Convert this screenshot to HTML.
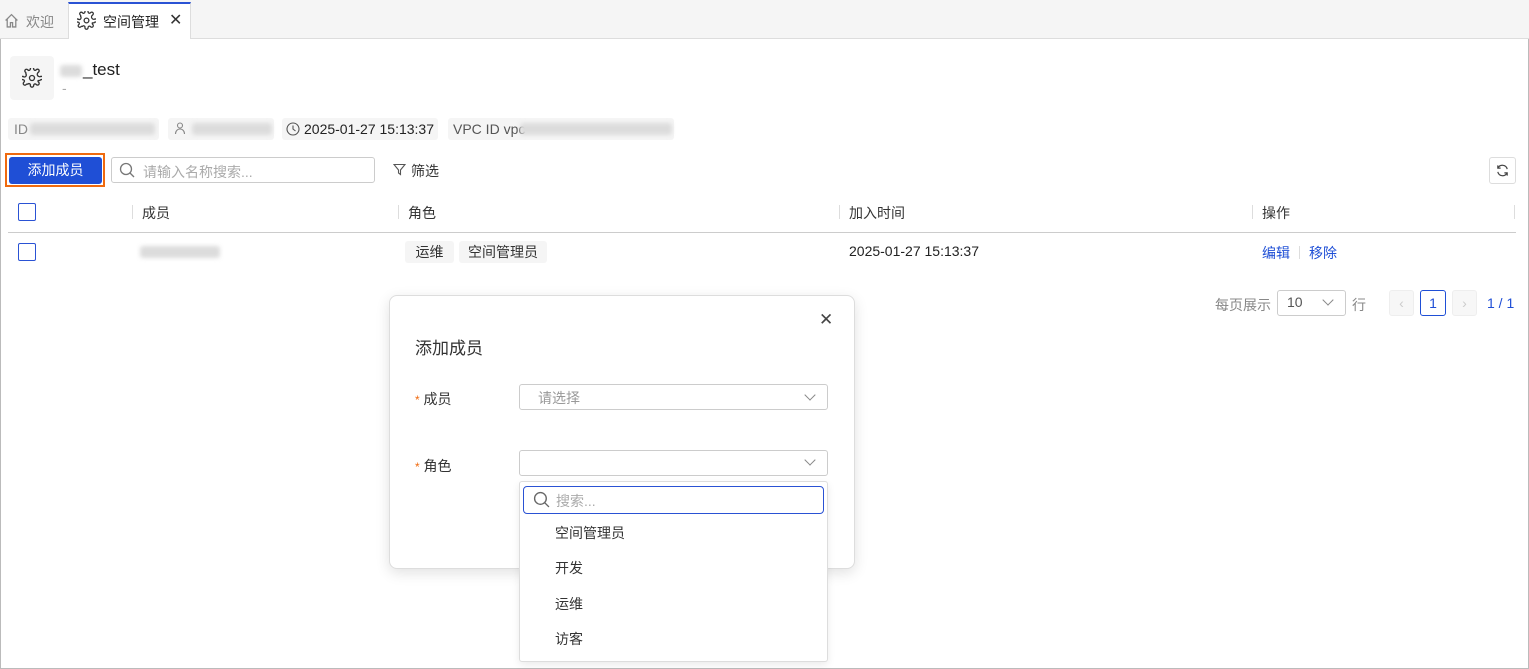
<!DOCTYPE html>
<html><head><meta charset="utf-8"><style>
*{box-sizing:border-box;margin:0;padding:0}
body{width:1529px;height:669px;background:#fff;font-family:"Liberation Sans","Noto Sans CJK SC",sans-serif;font-size:14px;color:#333;position:relative;overflow:hidden;border:1px solid #bbb}
.a{position:absolute}
.tabbar{left:-1px;top:-1px;width:1529px;height:39px;background:#f5f5f5;border-bottom:1px solid #ddd}
.tag{background:#f5f5f5;border-radius:3px;height:22px;line-height:22px}
.blur{background:#dcdcdc;filter:blur(2px);height:12px;border-radius:3px}
.cb{width:18px;height:18px;border:1.5px solid #2a52d4;border-radius:2px}
.div{width:1px;height:14px;background:#ddd}
.sel{border:1px solid #ccc;border-radius:3px;background:#fff}
.chev{width:8px;height:8px;border-right:1.3px solid #888;border-bottom:1.3px solid #888;transform:rotate(45deg)}
</style></head><body>
<div class="a tabbar"></div>
<svg class="a" style="left:3px;top:12px" width="15" height="15" viewBox="0 0 14 14" fill="none" stroke="#888" stroke-width="1.2"><path d="M1.5 7L7 1.5 12.5 7M3 5.5V13h3V9h2v4h3V5.5"/></svg>
<div class="a" style="left:25px;top:11px;color:#888;font-size:14px">欢迎</div>
<div class="a" style="left:67px;top:1px;width:123px;height:37px;background:#fff;border-top:2px solid #2a52d4;border-left:1px solid #ddd;border-right:1px solid #ddd"></div>
<svg class="a" style="left:76px;top:10px" width="19" height="19" viewBox="0 0 24 24" fill="none" stroke="#333" stroke-width="1.6"><circle cx="12" cy="12" r="3"/><path d="M19.4 15a1.7 1.7 0 0 0 .3 1.8l.1.1a2 2 0 1 1-2.8 2.8l-.1-.1a1.7 1.7 0 0 0-2.9 1.2V21a2 2 0 1 1-4 0v-.1A1.7 1.7 0 0 0 7 19.4a1.7 1.7 0 0 0-1.8.3l-.1.1a2 2 0 1 1-2.8-2.8l.1-.1A1.7 1.7 0 0 0 1.200 14H1a2 2 0 1 1 0-4h.1A1.7 1.7 0 0 0 4.6 7a1.7 1.7 0 0 0-.3-1.8l-.1-.1a2 2 0 1 1 2.8-2.8l.1.1A1.7 1.7 0 0 0 10 1.2V1a2 2 0 1 1 4 0v.1a1.7 1.7 0 0 0 2.9 1.2l.1-.1a2 2 0 1 1 2.8 2.8l-.1.1A1.7 1.7 0 0 0 22.8 10H23a2 2 0 1 1 0 4h-.1a1.7 1.7 0 0 0-1.5 1z"/></svg>
<div class="a" style="left:102px;top:11px;font-size:14px;color:#222">空间管理</div>
<div class="a" style="left:168px;top:9px;font-size:16px;color:#333">✕</div>

<div class="a" style="left:9px;top:55px;width:44px;height:44px;background:#f5f5f5;border-radius:4px"></div>
<svg class="a" style="left:21px;top:67px" width="20" height="20" viewBox="0 0 24 24" fill="none" stroke="#333" stroke-width="1.6"><circle cx="12" cy="12" r="3"/><path d="M19.4 15a1.7 1.7 0 0 0 .3 1.8l.1.1a2 2 0 1 1-2.8 2.8l-.1-.1a1.7 1.7 0 0 0-2.9 1.2V21a2 2 0 1 1-4 0v-.1A1.7 1.7 0 0 0 7 19.4a1.7 1.7 0 0 0-1.8.3l-.1.1a2 2 0 1 1-2.8-2.8l.1-.1A1.7 1.7 0 0 0 1.2 14H1a2 2 0 1 1 0-4h.1A1.7 1.7 0 0 0 4.6 7a1.7 1.7 0 0 0-.3-1.8l-.1-.1a2 2 0 1 1 2.8-2.8l.1.1A1.7 1.7 0 0 0 10 1.2V1a2 2 0 1 1 4 0v.1a1.7 1.7 0 0 0 2.9 1.2l.1-.1a2 2 0 1 1 2.8 2.8l-.1.1A1.7 1.7 0 0 0 22.8 10H23a2 2 0 1 1 0 4h-.1a1.7 1.7 0 0 0-1.5 1z"/></svg>
<div class="a blur" style="left:59px;top:64px;width:22px;height:12px"></div>
<div class="a" style="left:82px;top:59px;font-size:17px;color:#222">_test</div>
<div class="a" style="left:61px;top:79px;color:#aaa">-</div>

<div class="a tag" style="left:7px;top:117px;width:151px;padding-left:6px;color:#888">ID</div>
<div class="a blur" style="left:29px;top:122px;width:125px"></div>
<div class="a tag" style="left:167px;top:117px;width:106px"></div>
<svg class="a" style="left:172px;top:120px" width="14" height="14" viewBox="0 0 14 14" fill="none" stroke="#888" stroke-width="1.1"><circle cx="7" cy="4.5" r="2.5"/><path d="M2.5 13c0-3 2-5 4.5-5s4.5 2 4.5 5"/></svg>
<div class="a blur" style="left:191px;top:122px;width:80px"></div>
<div class="a tag" style="left:281px;top:117px;width:156px;padding-left:22px;font-size:14px;color:#222">2025-01-27 15:13:37</div>
<svg class="a" style="left:285px;top:121px" width="14" height="14" viewBox="0 0 14 14" fill="none" stroke="#555" stroke-width="1.1"><circle cx="7" cy="7" r="6"/><path d="M7 3.5V7l2.5 2"/></svg>
<div class="a tag" style="left:447px;top:117px;width:226px;padding-left:5px;font-size:14px;color:#555">VPC ID vpc</div>
<div class="a blur" style="left:519px;top:122px;width:152px"></div>

<div class="a" style="left:4px;top:152px;width:100px;height:34px;border:2px solid #f06a0f"></div>
<div class="a" style="left:8px;top:156px;width:93px;height:27px;background:#1f4fd6;border-radius:3px;color:#fff;text-align:center;line-height:27px">添加成员</div>
<div class="a sel" style="left:110px;top:156px;width:264px;height:26px"></div>
<svg class="a" style="left:118px;top:161px" width="16" height="16" viewBox="0 0 16 16" fill="none" stroke="#777" stroke-width="1.3"><circle cx="7" cy="7" r="5.5"/><path d="M11 11l4 4"/></svg>
<div class="a" style="left:142px;top:161px;color:#aaa">请输入名称搜索...</div>
<svg class="a" style="left:392px;top:162px" width="13" height="13" viewBox="0 0 13 13" fill="none" stroke="#555" stroke-width="1.1"><path d="M1 1.5h11L7.5 7v4.5L5.5 10V7z"/></svg>
<div class="a" style="left:410px;top:160px;color:#333">筛选</div>
<div class="a sel" style="left:1488px;top:156px;width:27px;height:27px;border-color:#ddd"></div>
<svg class="a" style="left:1494px;top:162px" width="15" height="15" viewBox="0 0 16 16" fill="none" stroke="#444" stroke-width="1.3"><path d="M13 6.5A5.2 5.2 0 0 0 3.2 5.5M3 9.5A5.2 5.2 0 0 0 12.8 10.5"/><path d="M3 2.5v3h3M13 13.5v-3h-3"/></svg>

<div class="a cb" style="left:17px;top:202px"></div>
<div class="a div" style="left:131px;top:204px"></div><div class="a" style="left:141px;top:202px">成员</div>
<div class="a div" style="left:397px;top:204px"></div><div class="a" style="left:407px;top:202px">角色</div>
<div class="a div" style="left:838px;top:204px"></div><div class="a" style="left:848px;top:202px">加入时间</div>
<div class="a div" style="left:1251px;top:204px"></div><div class="a" style="left:1261px;top:202px">操作</div>
<div class="a div" style="left:1513px;top:204px"></div>
<div class="a" style="left:7px;top:231px;width:1508px;height:1px;background:#ccc"></div>
<div class="a cb" style="left:17px;top:242px"></div>
<div class="a blur" style="left:139px;top:245px;width:80px"></div>
<div class="a tag" style="left:404px;top:240px;width:49px;text-align:center">运维</div>
<div class="a tag" style="left:458px;top:240px;width:88px;text-align:center">空间管理员</div>
<div class="a" style="left:848px;top:242px;color:#222">2025-01-27 15:13:37</div>
<div class="a" style="left:1261px;top:242px;color:#1f4fd6">编辑</div>
<div class="a div" style="left:1298px;top:245px;height:13px"></div>
<div class="a" style="left:1308px;top:242px;color:#1f4fd6">移除</div>

<div class="a" style="left:1214px;top:294px;color:#888">每页展示</div>
<div class="a sel" style="left:1276px;top:289px;width:69px;height:26px"></div>
<div class="a" style="left:1286px;top:293px;color:#555">10</div>
<div class="a chev" style="left:1323px;top:295px"></div>
<div class="a" style="left:1351px;top:294px;color:#888">行</div>
<div class="a sel" style="left:1388px;top:289px;width:25px;height:26px;border-color:#eee;background:#f7f7f7;color:#ccc;text-align:center;line-height:24px">‹</div>
<div class="a sel" style="left:1419px;top:289px;width:26px;height:26px;border-color:#1f4fd6;text-align:center;line-height:24px;color:#1f4fd6">1</div>
<div class="a sel" style="left:1451px;top:289px;width:25px;height:26px;border-color:#eee;background:#f7f7f7;color:#ccc;text-align:center;line-height:24px">›</div>
<div class="a" style="left:1486px;top:294px;color:#1f4fd6">1 / 1</div>

<div class="a" style="left:388px;top:294px;width:466px;height:274px;background:#fff;border:1px solid #ddd;border-radius:8px;box-shadow:0 4px 14px rgba(0,0,0,.12)"></div>
<div class="a" style="left:818px;top:309px;font-size:17px;color:#444">✕</div>
<div class="a" style="left:414px;top:333px;font-size:17px;color:#333">添加成员</div>
<div class="a" style="left:414px;top:388px"><span style="color:#f06a0f;font-size:12px">*</span> 成员</div>
<div class="a" style="left:414px;top:455px"><span style="color:#f06a0f;font-size:12px">*</span> 角色</div>
<div class="a sel" style="left:518px;top:383px;width:309px;height:26px"></div>
<div class="a" style="left:537px;top:387px;color:#999;font-size:14px">请选择</div>
<div class="a chev" style="left:805px;top:390px"></div>
<div class="a sel" style="left:518px;top:449px;width:309px;height:26px"></div>
<div class="a chev" style="left:805px;top:455px"></div>

<div class="a" style="left:518px;top:480px;width:309px;height:181px;background:#fff;border:1px solid #ddd;border-radius:3px;box-shadow:0 3px 8px rgba(0,0,0,.08)"></div>
<div class="a" style="left:522px;top:485px;width:301px;height:28px;border:1.5px solid #2a52d4;border-radius:4px"></div>
<svg class="a" style="left:532px;top:490px" width="17" height="17" viewBox="0 0 16 16" fill="none" stroke="#666" stroke-width="1.3"><circle cx="7" cy="7" r="5.5"/><path d="M11 11l4 4"/></svg>
<div class="a" style="left:555px;top:490px;color:#aaa">搜索...</div>
<div class="a" style="left:554px;top:522px">空间管理员</div>
<div class="a" style="left:554px;top:557px">开发</div>
<div class="a" style="left:554px;top:593px">运维</div>
<div class="a" style="left:554px;top:628px">访客</div>
</body></html>
